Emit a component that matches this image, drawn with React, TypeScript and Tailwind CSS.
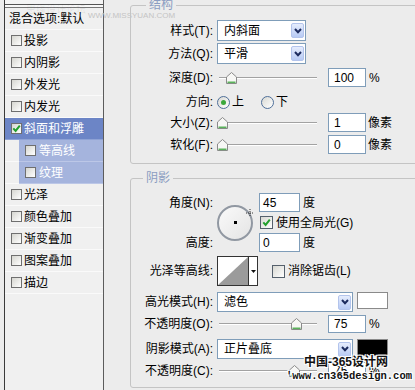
import React from "react";

type Effect = { name: string; checked?: boolean; active?: boolean; sub?: boolean };

const EFFECTS: Effect[] = [
  { name: "投影" },
  { name: "内阴影" },
  { name: "外发光" },
  { name: "内发光" },
  { name: "斜面和浮雕", checked: true, active: true },
  { name: "等高线", sub: true },
  { name: "纹理", sub: true },
  { name: "光泽" },
  { name: "颜色叠加" },
  { name: "渐变叠加" },
  { name: "图案叠加" },
  { name: "描边" },
];

const CheckMark = () => (
  <svg width="9" height="9" viewBox="0 0 9 9">
    <path d="M1.3 4.4 L3.6 6.9 L7.8 1.6" fill="none" stroke="#22a02c" strokeWidth="2" />
  </svg>
);

const ListCheck = ({ checked }: { checked?: boolean }) => (
  <span className="w-[11px] h-[11px] shrink-0 border border-[#6f6f6f] bg-linear-to-br from-[#d6d6d0] to-white flex items-center justify-center">
    {checked && <CheckMark />}
  </span>
);

const EffectRow = ({ e }: { e: Effect }) => {
  // sub items of the bevel effect sit indented in a lighter blue
  if (e.sub) {
    return (
      <div className="h-[22px] flex">
        <div className="w-[14px] border-b border-[#fafafa]" />
        <div className="flex-1 flex items-center gap-[3px] pl-[6px] bg-[#a5b4dd] text-white border-b border-[#bcc7e7]">
          <ListCheck />
          <span>{e.name}</span>
        </div>
      </div>
    );
  }
  return (
    <div
      className={
        e.active
          ? "h-[22px] flex items-center gap-[2px] pl-[6px] bg-[#6c85c6] text-white border-b border-[#8ea2d5]"
          : "h-[22px] flex items-center gap-[2px] pl-[6px] border-b border-[#fafafa]"
      }
    >
      <ListCheck checked={e.checked} />
      <span>{e.name}</span>
    </div>
  );
};

const Label = ({ children }: { children?: React.ReactNode }) => (
  <span className="w-[82px] mr-[4px] shrink-0 text-right">{children}</span>
);

const Select = ({ value, w }: { value: string; w: string }) => (
  <div className={`${w} h-full shrink-0 border border-[#7f9db9] bg-white flex items-center pl-[6px] pr-[1px]`}>
    <span className="flex-1">{value}</span>
    <span className="w-[13px] h-[15px] rounded-[2px] border border-[#b3c4ec] bg-linear-to-b from-[#e6edfd] to-[#b7caf4] flex items-center justify-center">
      <svg width="8" height="6" viewBox="0 0 8 6">
        <polyline points="1,1 4,4.2 7,1" fill="none" stroke="#1c2b5e" strokeWidth="2" />
      </svg>
    </span>
  </div>
);

const NumBox = ({ value, cls }: { value: string; cls: string }) => (
  <div className={`${cls} h-full shrink-0 border border-[#7f9db9] bg-white flex items-center`}>{value}</div>
);

const Thumb = () => (
  <svg width="11" height="12" viewBox="0 0 11 12">
    <path d="M5.5 0.5 L10.5 5 L10.5 11.5 L0.5 11.5 L0.5 5 Z" fill="#f7f7f5" stroke="#8a8a8a" />
    <path d="M1.5 10.3 H9.5" stroke="#5bb35b" strokeWidth="1.6" />
  </svg>
);

const Slider = ({ pos }: { pos: number }) => (
  <div className="relative w-[100px] h-[14px] shrink-0">
    <div className="absolute left-[2px] right-0 top-[6px] h-[2px] border-t border-[#a2a2a2] bg-white" />
    <div className="absolute top-[1px]" style={{ left: pos }}>
      <Thumb />
    </div>
  </div>
);

const Radio = ({ on }: { on?: boolean }) => (
  <span className="w-[13px] h-[13px] shrink-0 rounded-full border border-[#4f6f99] bg-linear-to-br from-[#d9d9d3] to-white flex items-center justify-center">
    {on && <span className="w-[5px] h-[5px] rounded-full bg-[#3ba83b]" />}
  </span>
);

const Box = ({ checked }: { checked?: boolean }) => (
  <span className="w-[13px] h-[13px] shrink-0 border border-[#55606c] bg-linear-to-br from-[#d8d8d2] to-white flex items-center justify-center">
    {checked && <CheckMark />}
  </span>
);

const Group = ({
  title,
  legend,
  cls,
  children,
}: {
  title: string;
  legend: string;
  cls: string;
  children: React.ReactNode;
}) => (
  <div className={`w-[300px] shrink-0 border border-[#c4c4c4] rounded-[3px] flex flex-col ${cls}`}>
    <span className={`-mt-[6px] w-fit px-[3px] bg-[#ececec] leading-[11px] text-[#8b9dc1] ${legend}`}>{title}</span>
    {children}
  </div>
);

export default function App() {
  return (
    <div className="relative w-[415px] h-[390px] overflow-hidden flex bg-[#ececec] text-black text-[12px] leading-[14px] font-['Liberation_Sans','Noto_Sans_CJK_SC',sans-serif]">
      {/* Effect list */}
      <div className="w-[104px] shrink-0 pl-[4px] flex">
        <div className="flex-1 flex flex-col bg-[#f0f0f0] border-l border-r border-l-[#3a3a3a] border-r-[#5c5c5c]">
          <div className="h-[4px] bg-[#f4f4f4]" />
          <div className="h-[1px] bg-[#555]" />
          <div className="h-[2px] bg-[#f8f8f8]" />
          <div className="h-[1px] bg-[#777]" />
          <div className="h-[22px] flex items-center pl-[4px] border-b border-[#fafafa]">混合选项:默认</div>
          {EFFECTS.map((e) => (
            <EffectRow key={e.name} e={e} />
          ))}
        </div>
      </div>

      {/* Settings */}
      <div className="flex-1 min-w-0 pt-[5px] pl-[26px] flex flex-col">
        <Group title="结构" legend="ml-[15px]" cls="h-[159px]">
          <div className="mt-[9px] h-[21px] flex items-center">
            <Label>样式(T):</Label>
            <Select value="内斜面" w="w-[89px]" />
          </div>
          <div className="mt-[2px] h-[21px] flex items-center">
            <Label>方法(Q):</Label>
            <Select value="平滑" w="w-[89px]" />
          </div>
          <div className="mt-[4px] h-[19px] flex items-center">
            <Label>深度(D):</Label>
            <Slider pos={9} />
            <NumBox value="100" cls="ml-[11px] w-[38px] pl-[5px]" />
            <span className="ml-[3px]">%</span>
          </div>
          <div className="mt-[6px] h-[18px] flex items-center">
            <Label>方向:</Label>
            <Radio on />
            <span className="ml-[2px]">上</span>
            <span className="ml-[17px]">
              <Radio />
            </span>
            <span className="ml-[2px]">下</span>
          </div>
          <div className="mt-[2px] h-[19px] flex items-center">
            <Label>大小(Z):</Label>
            <Slider pos={0} />
            <NumBox value="1" cls="ml-[11px] w-[38px] pl-[5px]" />
            <span className="ml-[2px]">像素</span>
          </div>
          <div className="mt-[3px] h-[19px] flex items-center">
            <Label>软化(F):</Label>
            <Slider pos={0} />
            <NumBox value="0" cls="ml-[11px] w-[38px] pl-[5px]" />
            <span className="ml-[2px]">像素</span>
          </div>
        </Group>

        <Group title="阴影" legend="ml-[12px]" cls="mt-[14px] h-[210px]">
          <div className="mt-[9px] grid grid-cols-[86px_36px_1fr] grid-rows-[19px_13px_19px] gap-y-[4px] items-center">
            <span className="col-start-1 row-start-1 pr-[4px] text-right">角度(N):</span>
            <div className="col-start-2 row-start-1 row-span-3 self-center relative w-[36px] h-[36px] rounded-full border-2 border-[#9198a2] bg-linear-to-br from-[#fafafa] to-[#e4e4e4] flex items-center justify-center">
              <span className="w-[3px] h-[3px] bg-black" />
              <svg className="absolute left-[27px] top-[2px]" width="8" height="8" viewBox="0 0 8 8">
                <path d="M4 0v8M0 4h8" stroke="#333" strokeWidth="1" strokeDasharray="1 1" />
              </svg>
            </div>
            <div className="col-start-3 row-start-1 h-full flex items-center ml-[6px]">
              <NumBox value="45" cls="w-[41px] pl-[3px]" />
              <span className="ml-[3px]">度</span>
            </div>
            <div className="col-start-3 row-start-2 flex items-center ml-[7px]">
              <Box checked />
              <span className="ml-[3px]">使用全局光(G)</span>
            </div>
            <span className="col-start-1 row-start-3 pr-[4px] text-right">高度:</span>
            <div className="col-start-3 row-start-3 h-full flex items-center ml-[6px]">
              <NumBox value="0" cls="w-[41px] pl-[3px]" />
              <span className="ml-[3px]">度</span>
            </div>
          </div>

          <div className="mt-[4px] h-[30px] flex items-center">
            <Label>光泽等高线:</Label>
            <div className="h-[30px] flex border border-[#333] bg-white shrink-0">
              <svg width="30" height="28" viewBox="0 0 30 28">
                <polygon points="0,28 30,0 30,28" fill="#9b9b9b" />
              </svg>
              <div className="w-[9px] border-l border-[#333] flex items-center justify-center">
                <svg width="5" height="3" viewBox="0 0 5 3">
                  <polygon points="0,0 5,0 2.5,3" fill="#111" />
                </svg>
              </div>
            </div>
            <span className="ml-[14px]">
              <Box />
            </span>
            <span className="ml-[3px]">消除锯齿(L)</span>
          </div>

          <div className="mt-[6px] h-[20px] flex items-center">
            <Label>高光模式(H):</Label>
            <Select value="滤色" w="w-[136px]" />
            <span className="ml-[4px] self-start w-[31px] h-[17px] border border-[#8a8a8a] bg-white" />
          </div>
          <div className="mt-[3px] h-[18px] flex items-center">
            <Label>不透明度(O):</Label>
            <Slider pos={74} />
            <NumBox value="75" cls="ml-[11px] w-[38px] pl-[5px]" />
            <span className="ml-[3px]">%</span>
          </div>
          <div className="mt-[6px] h-[20px] flex items-center">
            <Label>阴影模式(A):</Label>
            <Select value="正片叠底" w="w-[136px]" />
            <span className="ml-[4px] self-start w-[31px] h-[17px] border border-[#8a8a8a] bg-black" />
          </div>
          <div className="mt-[3px] h-[18px] flex items-center">
            <Label>不透明度(C):</Label>
            <Slider pos={72} />
            <NumBox value="75" cls="ml-[11px] w-[38px] pl-[5px]" />
            <span className="ml-[3px]">%</span>
          </div>
        </Group>
      </div>

      {/* watermarks */}
      <span className="absolute left-[26px] top-[5px] text-[10px] leading-[10px] text-black/[0.08] pointer-events-none">
        思缘设计论坛
      </span>
      <span className="absolute left-[88px] top-[12px] text-[8px] leading-[8px] text-[#c4c4c4] pointer-events-none">
        WWW.MISSYUAN.COM
      </span>
      <span className="absolute left-[304px] top-[355px] text-[12px] leading-[14px] font-bold text-[#111] [text-shadow:1px_1px_0_#fff,-1px_-1px_0_#fff,1px_-1px_0_#fff,-1px_1px_0_#fff]">
        中国-365设计网
      </span>
      <span className="absolute left-[286px] top-[370px] text-[10.5px] leading-[12px] font-bold font-['Liberation_Mono',monospace] text-[#111] [text-shadow:1px_1px_0_#fff,-1px_-1px_0_#fff,1px_-1px_0_#fff,-1px_1px_0_#fff]">
        'www.cn365design.com
      </span>
    </div>
  );
}
